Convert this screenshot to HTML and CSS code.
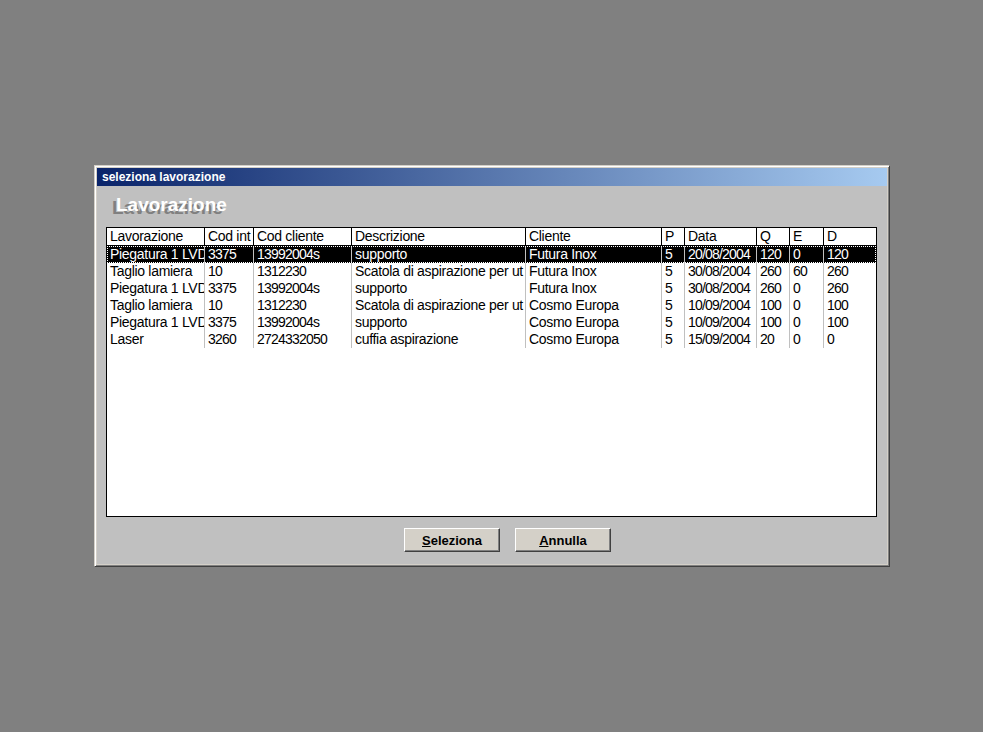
FILE: index.html
```html
<!DOCTYPE html>
<html lang="it">
<head>
<meta charset="utf-8">
<title>seleziona lavorazione</title>
<link rel="stylesheet" href="styles.css">
</head>
<body>
<div class="desktop">
  <div class="dialog">
    <div class="titlebar">seleziona lavorazione</div>
    <div class="body">
      <div class="heading">Lavorazione</div>
      <div class="listbox">
        <div class="row head">
          <div class="cell">Lavorazione</div><div class="cell">Cod int</div><div class="cell">Cod cliente</div><div class="cell">Descrizione</div><div class="cell">Cliente</div><div class="cell">P</div><div class="cell">Data</div><div class="cell">Q</div><div class="cell">E</div><div class="cell">D</div>
        </div>
        <div class="row sel">
          <div class="cell">Piegatura 1 LVD</div><div class="cell">3375</div><div class="cell">13992004s</div><div class="cell">supporto</div><div class="cell">Futura Inox</div><div class="cell">5</div><div class="cell">20/08/2004</div><div class="cell">120</div><div class="cell">0</div><div class="cell">120</div>
        </div>
        <div class="row">
          <div class="cell">Taglio lamiera</div><div class="cell">10</div><div class="cell">1312230</div><div class="cell">Scatola di aspirazione per ut</div><div class="cell">Futura Inox</div><div class="cell">5</div><div class="cell">30/08/2004</div><div class="cell">260</div><div class="cell">60</div><div class="cell">260</div>
        </div>
        <div class="row">
          <div class="cell">Piegatura 1 LVD</div><div class="cell">3375</div><div class="cell">13992004s</div><div class="cell">supporto</div><div class="cell">Futura Inox</div><div class="cell">5</div><div class="cell">30/08/2004</div><div class="cell">260</div><div class="cell">0</div><div class="cell">260</div>
        </div>
        <div class="row">
          <div class="cell">Taglio lamiera</div><div class="cell">10</div><div class="cell">1312230</div><div class="cell">Scatola di aspirazione per ut</div><div class="cell">Cosmo Europa</div><div class="cell">5</div><div class="cell">10/09/2004</div><div class="cell">100</div><div class="cell">0</div><div class="cell">100</div>
        </div>
        <div class="row">
          <div class="cell">Piegatura 1 LVD</div><div class="cell">3375</div><div class="cell">13992004s</div><div class="cell">supporto</div><div class="cell">Cosmo Europa</div><div class="cell">5</div><div class="cell">10/09/2004</div><div class="cell">100</div><div class="cell">0</div><div class="cell">100</div>
        </div>
        <div class="row">
          <div class="cell">Laser</div><div class="cell">3260</div><div class="cell">2724332050</div><div class="cell">cuffia aspirazione</div><div class="cell">Cosmo Europa</div><div class="cell">5</div><div class="cell">15/09/2004</div><div class="cell">20</div><div class="cell">0</div><div class="cell">0</div>
        </div>
      </div>
      <div class="buttons">
        <button class="btn"><u>S</u>eleziona</button>
        <button class="btn"><u>A</u>nnulla</button>
      </div>
    </div>
  </div>
</div>
</body>
</html>
```

FILE: styles.css
```css
html, body {
  margin: 0;
  height: 100%;
}
body {
  background: #808080;
  font-family: "Liberation Sans", Arial, sans-serif;
}
.desktop {
  padding: 165px 0 0 94px;
}
.dialog {
  width: 796px;
  height: 402px;
  box-sizing: border-box;
  border: 1px solid;
  border-color: #d4d0c8 #404040 #404040 #d4d0c8;
  box-shadow: inset 1px 1px 0 #ffffff, inset -1px -1px 0 #808080;
  padding: 2px;
  background: #d4d0c8;
  display: flex;
  flex-direction: column;
}
.titlebar {
  height: 18px;
  line-height: 18px;
  padding-left: 5px;
  color: #ffffff;
  font-weight: bold;
  font-size: 12px;
  background: linear-gradient(to right, #0a246a, #a6caf0);
}
.body {
  flex: 1;
  background: #c0c0c0;
  padding-top: 8px;
}
.heading {
  font-size: 19px;
  line-height: 22px;
  font-weight: bold;
  color: #ffffff;
  text-shadow: -4px 3px 0 #808080;
  padding-left: 19px;
}
.listbox {
  margin: 11px 10px 0 9px;
  height: 290px;
  box-sizing: border-box;
  border: 1px solid #000000;
  background: #ffffff;
  overflow: hidden;
}
.row {
  display: grid;
  grid-template-columns: 98px 49px 98px 174px 136px 23px 72px 33px 34px 52px;
  height: 17px;
  font-size: 14px;
  letter-spacing: -0.3px;
  line-height: 17px;
  color: #000000;
}
.cell {
  box-sizing: border-box;
  padding-left: 3px;
  border-right: 1px solid #c0c0c0;
  white-space: nowrap;
  overflow: hidden;
}
.cell:last-child {
  border-right: none;
}
/* numeric columns: the original list font has narrow digits */
.row:not(.head) .cell:nth-child(2),
.row:not(.head) .cell:nth-child(3),
.row:not(.head) .cell:nth-child(n+6) {
  letter-spacing: -0.8px;
}
.row.head {
  height: 18px;
  border-bottom: 1px solid #000000;
  box-sizing: border-box;
}
.row.head .cell {
  border-right-color: #000000;
}
.row.head .cell:last-child {
  border-right: none;
}
.row.sel {
  background: #000000;
  color: #ffffff;
  outline: 1px dotted #ffffff;
  outline-offset: -1px;
}
.buttons {
  display: flex;
  gap: 15px;
  margin-top: 11px;
  padding-left: 307px;
}
.btn {
  width: 96px;
  height: 24px;
  box-sizing: border-box;
  padding: 0;
  font-family: "Liberation Sans", Arial, sans-serif;
  font-size: 13px;
  font-weight: bold;
  color: #000000;
  background: #d4d0c8;
  border: 1px solid;
  border-color: #ffffff #404040 #404040 #ffffff;
  box-shadow: inset -1px -1px 0 #808080;
}
```
